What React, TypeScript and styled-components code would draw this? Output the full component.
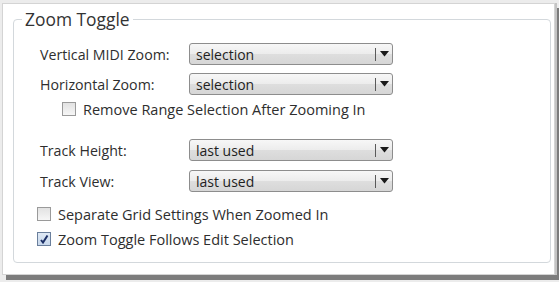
import React from "react";
import styled, { createGlobalStyle } from "styled-components";

const Global = createGlobalStyle`
  html, body { margin: 0; padding: 0; background: #ececec; }
  body { font-family: "Open Sans", "Noto Sans", sans-serif; }
`;

const Page = styled.div`
  width: 559px;
  height: 282px;
  overflow: hidden;
  box-sizing: border-box;
  padding: 3px 0 0 2px;
  background: #ececec;
`;

const Frame = styled.div`
  width: 553px;
  height: 272px;
  box-sizing: border-box;
  background: #ffffff;
  border: 1px solid #d4d4d4;
  box-shadow: 2px 0 0 #c4c4c4, 4px 5px 0 #7c7c7c;
  padding: 6px 4px 0 10px;
`;

const Group = styled.fieldset`
  margin: 0;
  box-sizing: border-box;
  width: 538px;
  border: 1px solid #d3d8dc;
  border-radius: 4px;
  padding: 0 0 15px 8px;
`;

const Title = styled.legend`
  padding: 0 3px;
  font-size: 17.4px;
  line-height: 19px;
  color: #333333;
`;

const Content = styled.div`
  display: flex;
  flex-direction: column;
  padding: 14px 0 0 18px;
`;

const Row = styled.div<{ $mt?: number }>`
  display: flex;
  align-items: center;
  height: 22px;
  margin-top: ${(p) => p.$mt ?? 0}px;
`;

const Label = styled.span`
  width: 149px;
  font-size: 14.2px;
  color: #2e2e2e;
  white-space: nowrap;
`;

const Select = styled.div`
  width: 204px;
  height: 22px;
  box-sizing: border-box;
  display: flex;
  align-items: center;
  border: 1px solid #8d8d8d;
  border-radius: 3px;
  background: linear-gradient(#f7f7f7, #ececec 50%, #dedede 51%, #d6d6d6);
`;

const Value = styled.span`
  flex: 1;
  padding-left: 6px;
  font-size: 14px;
  color: #1e1e1e;
`;

const Divider = styled.span`
  width: 1px;
  height: 13px;
  background: #5a5a5a;
`;

const Arrow = styled.span`
  width: 16px;
  display: flex;
  justify-content: center;
  align-items: center;
`;

const CheckRow = styled.label<{ $mt?: number; $indent?: number }>`
  display: flex;
  align-items: center;
  gap: 7px;
  height: 16px;
  margin-top: ${(p) => p.$mt ?? 0}px;
  margin-left: ${(p) => p.$indent ?? 0}px;
  font-size: 14.5px;
  color: #2e2e2e;
  white-space: nowrap;
`;

const Box = styled.span<{ $checked?: boolean }>`
  width: 14px;
  height: 14px;
  box-sizing: border-box;
  display: flex;
  align-items: center;
  justify-content: center;
  border: 1px solid ${(p) => (p.$checked ? "#6a7f9c" : "#9a9a9a")};
  background: ${(p) =>
    p.$checked
      ? "linear-gradient(#dfe9f5, #c8d8ec)"
      : "linear-gradient(#e2e2e2, #f6f6f6)"};
`;

const Combo: React.FC<{ value: string }> = ({ value }) => (
  <Select>
    <Value>{value}</Value>
    <Divider />
    <Arrow>
      <svg width="9" height="6" viewBox="0 0 9 6">
        <path d="M0 0 H9 L4.5 5.5 Z" fill="#1a1a1a" />
      </svg>
    </Arrow>
  </Select>
);

const Check: React.FC<{ checked?: boolean; text: string; mt?: number; indent?: number }> = ({
  checked,
  text,
  mt,
  indent,
}) => (
  <CheckRow $mt={mt} $indent={indent}>
    <Box $checked={checked}>
      {checked && (
        <svg width="10" height="10" viewBox="0 0 10 10">
          <path d="M2 6 L4 8.5 L8.5 1.5" fill="none" stroke="#1c2f66" strokeWidth="2" />
        </svg>
      )}
    </Box>
    {text}
  </CheckRow>
);

export default function App() {
  return (
    <Page>
      <Global />
      <Frame>
        <Group>
          <Title>Zoom Toggle</Title>
          <Content>
            <Row>
              <Label>Vertical MIDI Zoom:</Label>
              <Combo value="selection" />
            </Row>
            <Row $mt={8}>
              <Label>Horizontal Zoom:</Label>
              <Combo value="selection" />
            </Row>
            <Check text="Remove Range Selection After Zooming In" mt={6} indent={22} />
            <Row $mt={22}>
              <Label>Track Height:</Label>
              <Combo value="last used" />
            </Row>
            <Row $mt={9}>
              <Label>Track View:</Label>
              <Combo value="last used" />
            </Row>
            <Check text="Separate Grid Settings When Zoomed In" mt={14} indent={-3} />
            <Check checked text="Zoom Toggle Follows Edit Selection" mt={9} indent={-3} />
          </Content>
        </Group>
      </Frame>
    </Page>
  );
}
